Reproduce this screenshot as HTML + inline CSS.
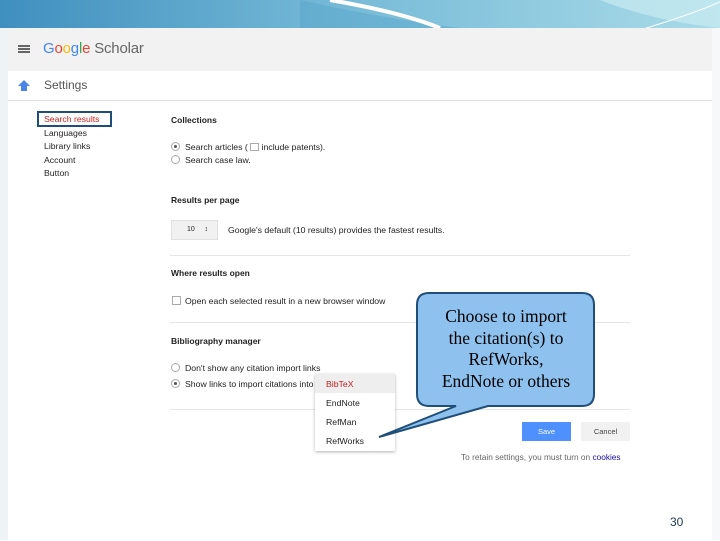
<!DOCTYPE html>
<html><head><meta charset="utf-8"><style>
*{margin:0;padding:0;box-sizing:border-box}
body{width:720px;height:540px;position:relative;overflow:hidden;background:#fff;font-family:"Liberation Sans",sans-serif;font-size:8.7px;color:#222}
.a{position:absolute;white-space:nowrap}
.h{font-weight:bold;font-size:8.5px}
.rad{position:absolute;width:9px;height:9px;border:1px solid #aaa;border-radius:50%;background:#fff}
.rad.on::after{content:"";position:absolute;left:2px;top:2px;width:3px;height:3px;border-radius:50%;background:#555}
.hr{position:absolute;left:170px;width:460px;height:1px;background:#e6e6e6}
</style></head><body>
<svg class="a" style="left:0;top:0" width="720" height="40">
<defs><linearGradient id="g" x1="0" x2="1"><stop offset="0" stop-color="#3f8fbf"/><stop offset=".5" stop-color="#79bcd8"/><stop offset="1" stop-color="#a9dbe8"/></linearGradient></defs>
<rect width="720" height="40" fill="url(#g)"/>
<path d="M300 0 Q380 18 460 28 L300 28Z" fill="#5aa5cc" opacity=".5"/>
<path d="M330 0 Q400 12 440 28" stroke="#fff" stroke-width="4" fill="none"/>
<path d="M600 0 Q650 20 720 28 L720 0Z" fill="#cfeef3" opacity=".6"/>
<path d="M640 30 Q690 15 720 2" stroke="#fff" stroke-width="1" fill="none"/>
</svg>
<div class="a" style="left:0;top:28px;width:8px;height:512px;background:#eef3f6"></div>
<div class="a" style="left:712px;top:28px;width:8px;height:512px;background:#f6f8f9"></div>
<div class="a" style="left:8px;top:28px;width:704px;height:43px;background:#f2f2f2"></div>
<div class="a" style="left:8px;top:71px;width:704px;height:470px;background:#fff"></div>
<div class="a" style="left:8px;top:100px;width:704px;height:1px;background:#e0e0e0"></div>
<div class="a" style="left:18px;top:45px;width:12px;height:2px;background:#666;box-shadow:0 3px 0 #666,0 6px 0 #666"></div>
<div class="a" style="left:43px;top:40px;font-size:15px;letter-spacing:-0.2px"><span style="color:#4285f4">G</span><span style="color:#ea4335">o</span><span style="color:#fbbc05">o</span><span style="color:#4285f4">g</span><span style="color:#34a853">l</span><span style="color:#ea4335">e</span><span style="color:#666"> Scholar</span></div>
<div class="a" style="left:18px;top:80px;width:0;height:0;border-left:6px solid transparent;border-right:6px solid transparent;border-bottom:6px solid #4a86e8"></div>
<div class="a" style="left:21px;top:86px;width:6px;height:5px;background:#4a86e8"></div>
<div class="a" style="left:44px;top:78px;font-size:12px;color:#555">Settings</div>
<div class="a" style="left:37px;top:111px;width:75px;height:16px;border:2px solid #1f4e79"></div>
<div class="a" style="left:44px;top:114px;color:#c5221f">Search results</div>
<div class="a" style="left:44px;top:128px">Languages</div>
<div class="a" style="left:44px;top:141px">Library links</div>
<div class="a" style="left:44px;top:155px">Account</div>
<div class="a" style="left:44px;top:168px">Button</div>
<div class="a h" style="left:171px;top:115px">Collections</div>
<div class="rad on" style="left:171px;top:142px"></div><div class="a" style="left:185px;top:142px">Search articles ( <span style="display:inline-block;width:9px;height:8px;border:1px solid #aaa;vertical-align:-1px"></span> include patents).</div>
<div class="rad" style="left:171px;top:155px"></div><div class="a" style="left:185px;top:155px">Search case law.</div>
<div class="a h" style="left:171px;top:195px">Results per page</div>
<div class="a" style="left:171px;top:220px;width:47px;height:20px;background:#f1f1f1;border:1px solid #e0e0e0;font-size:7px;padding:5px 0 0 15px">10 &nbsp;&nbsp;&nbsp;&nbsp;&#8597;</div>
<div class="a" style="left:228px;top:225px">Google's default (10 results) provides the fastest results.</div>
<div class="hr" style="top:255px"></div>
<div class="a h" style="left:171px;top:268px">Where results open</div>
<div class="a" style="left:172px;top:296px;width:9px;height:9px;border:1px solid #aaa"></div><div class="a" style="left:185px;top:296px">Open each selected result in a new browser window</div>
<div class="hr" style="top:322px"></div>
<div class="a h" style="left:171px;top:336px">Bibliography manager</div>
<div class="rad" style="left:171px;top:363px"></div><div class="a" style="left:185px;top:363px">Don't show any citation import links</div>
<div class="rad on" style="left:171px;top:379px"></div><div class="a" style="left:185px;top:379px">Show links to import citations into</div>
<div class="hr" style="top:409px"></div>
<div class="a" style="left:315px;top:374px;width:80px;height:77px;background:#fff;box-shadow:0 1px 3px rgba(0,0,0,.3)"></div>
<div class="a" style="left:315px;top:374px;width:80px;height:19px;background:#eee"></div>
<div class="a" style="left:326px;top:379px;color:#c5221f">BibTeX</div>
<div class="a" style="left:326px;top:398px">EndNote</div>
<div class="a" style="left:326px;top:417px">RefMan</div>
<div class="a" style="left:326px;top:436px">RefWorks</div>
<div class="a" style="left:522px;top:422px;width:49px;height:19px;background:#4d90fe;color:#fff;font-size:7.5px;text-align:center;line-height:19px">Save</div>
<div class="a" style="left:581px;top:422px;width:49px;height:19px;background:#f1f1f1;color:#444;font-size:7.5px;text-align:center;line-height:19px">Cancel</div>
<div class="a" style="left:461px;top:452px;font-size:8.3px;color:#666">To retain settings, you must turn on <span style="color:#1a0dab">cookies</span></div>
<svg class="a" style="left:370px;top:288px" width="230" height="155">
<path d="M59 5 Q47 5 47 17 V106 Q47 118 59 118 H86 L9 149 L118 118 H212 Q224 118 224 106 V17 Q224 5 212 5 Z" fill="#8ec1ee" stroke="#1f4e79" stroke-width="2"/>
</svg>
<div class="a" style="left:417px;top:306px;width:178px;text-align:center;font-family:'Liberation Serif',serif;font-size:17.5px;line-height:21.5px;color:#000">Choose to import<br>the citation(s) to<br>RefWorks,<br>EndNote or others</div>
<div class="a" style="left:670px;top:515px;font-size:12px;color:#1f3a4d">30</div>
</body></html>
